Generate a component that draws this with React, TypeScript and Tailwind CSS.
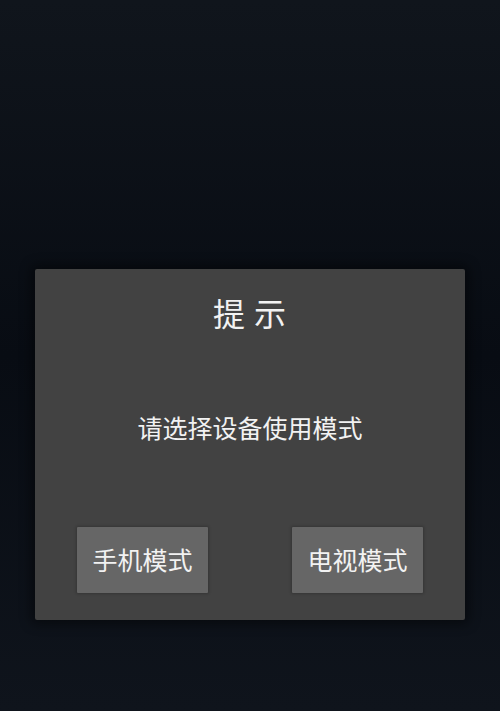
export default function App() {
  return (
    <div
      className="flex h-[711px] w-[500px] flex-col bg-gradient-to-b from-[#10151c] via-[#080c13] to-[#0f141c] pt-[269px]"
      style={{ fontFamily: '"Noto Sans CJK SC", "Noto Sans", sans-serif' }}
    >
      <div className="mx-[35px] flex h-[351px] flex-col items-center rounded-[2px] bg-[#424242] px-[42px] pt-[27px] pb-[27px] text-[#f2f2f2] shadow-[0_0_12px_4px_rgba(0,0,0,0.45)]">
        <h1 className="text-[32px] leading-[32px] tracking-[1px]">提 示</h1>
        <p className="mt-[87px] text-[25px] leading-[25px]">请选择设备使用模式</p>
        <div className="mt-auto flex w-full justify-between">
          <button className="h-[66px] w-[131px] rounded-[1px] bg-[#666666] pb-[2px] text-[25px] leading-[25px] text-[#f2f2f2] shadow-[0_0_3px_1px_rgba(0,0,0,0.2)]">
            手机模式
          </button>
          <button className="h-[66px] w-[131px] rounded-[1px] bg-[#666666] pb-[2px] text-[25px] leading-[25px] text-[#f2f2f2] shadow-[0_0_3px_1px_rgba(0,0,0,0.2)]">
            电视模式
          </button>
        </div>
      </div>
    </div>
  )
}
